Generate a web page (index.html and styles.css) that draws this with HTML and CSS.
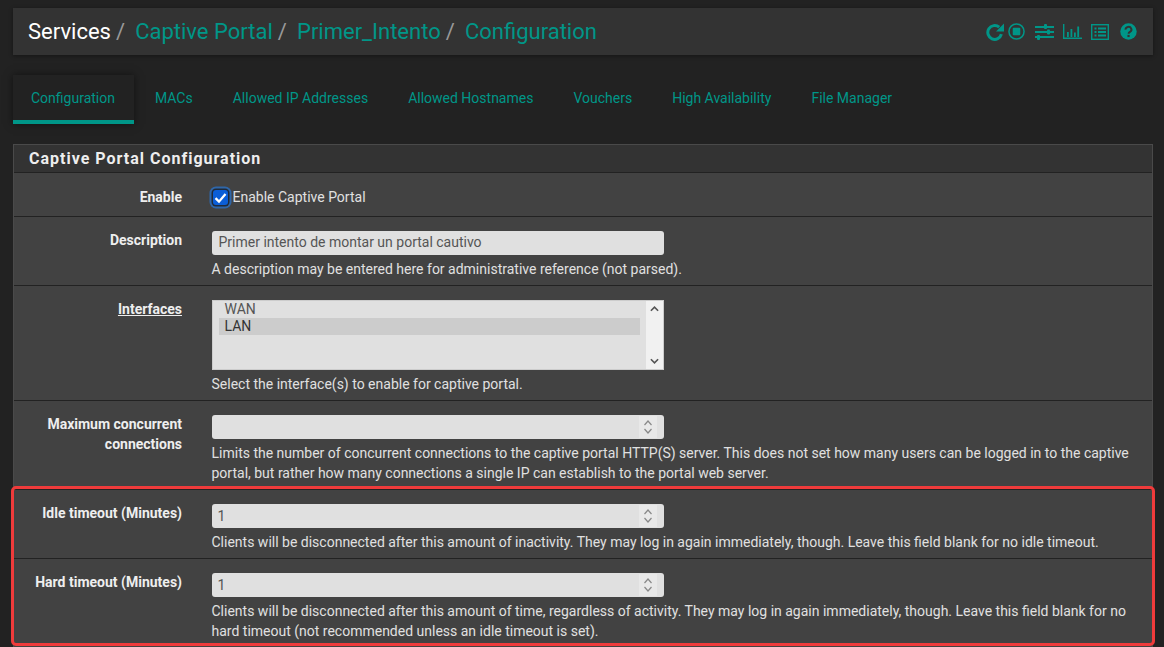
FILE: index.html
```html
<!DOCTYPE html>
<html lang="en">
<head>
<meta charset="utf-8">
<title>Captive Portal Configuration</title>
<link rel="stylesheet" href="styles.css">
</head>
<body>
<header class="crumbs">
  <h1 class="crumb-list">
    <span class="crumb-root">Services</span><span class="sep">/</span>
    <a class="crumb">Captive Portal</a><span class="sep">/</span>
    <a class="crumb">Primer_Intento</a><span class="sep">/</span>
    <a class="crumb">Configuration</a>
  </h1>
  <div class="actions">
    <svg class="ico ico-reload" viewBox="0 0 18 18"><path d="M15.400 11.200A6.900 6.900 0 1 1 13.200 4.200" fill="none" stroke="currentColor" stroke-width="3"/><path d="M10 8.500h8V.5z" fill="currentColor"/></svg>
    <svg class="ico ico-stop" viewBox="0 0 18 18"><circle cx="9" cy="9" r="8" fill="none" stroke="currentColor" stroke-width="1.600"/><rect x="5" y="5" width="8" height="8" rx="1" fill="currentColor"/></svg>
    <svg class="ico ico-sliders" viewBox="0 0 19 16"><path d="M0 3h19M0 8h19M0 13h19" stroke="currentColor" stroke-width="2"/><rect x="9" y="0" width="3" height="5" rx="1" fill="currentColor"/><rect x="12" y="5.500" width="3" height="5" rx="1" fill="currentColor"/><rect x="2" y="11" width="3" height="5" rx="1" fill="currentColor"/></svg>
    <svg class="ico ico-chart" viewBox="0 0 19 15"><path d="M.7 0v14.300H19" fill="none" stroke="currentColor" stroke-width="1.400"/><path d="M4 8h1.800v5H4zM7.500 5h1.800v8H7.500zM11 8.500h1.800V13H11zM14.300 2.500h1.800V13h-1.800z" fill="currentColor"/></svg>
    <svg class="ico ico-list" viewBox="0 0 18 16"><rect x=".7" y=".7" width="16.600" height="14.600" fill="none" stroke="currentColor" stroke-width="1.400"/><path d="M3.500 3.500h2v2h-2zM3.500 7h2v2h-2zM3.500 10.500h2v2h-2zM7 3.500h8v2H7zM7 7h8v2H7zM7 10.500h8v2H7z" fill="currentColor"/></svg>
    <svg class="ico ico-help" viewBox="0 0 18 18"><circle cx="9" cy="9" r="8.700" fill="currentColor"/><path d="M5.900 7a3.100 2.800 0 1 1 4.700 2.300c-1 .7-1.500 1-1.500 2.200" fill="none" stroke="#333" stroke-width="2.100"/><rect x="7.900" y="12.600" width="2.300" height="2.300" fill="#333"/></svg>
  </div>
</header>

<nav class="tabs">
  <a class="tab is-active">Configuration</a>
  <a class="tab">MACs</a>
  <a class="tab">Allowed IP Addresses</a>
  <a class="tab">Allowed Hostnames</a>
  <a class="tab">Vouchers</a>
  <a class="tab">High Availability</a>
  <a class="tab">File Manager</a>
</nav>

<section class="panel">
  <h2 class="panel-title">Captive Portal Configuration</h2>

  <div class="row row-enable">
    <div class="label">Enable</div>
    <div class="field check-field">
      <span class="checkbox"><svg viewBox="0 0 12 12"><path d="M2 6.500l2.800 2.800L10 3.200" fill="none" stroke="#fff" stroke-width="1.800"/></svg></span>
      <span>Enable Captive Portal</span>
    </div>
  </div>

  <div class="row row-desc">
    <div class="label">Description</div>
    <div class="field">
      <div class="input">Primer intento de montar un portal cautivo</div>
      <p class="help">A description may be entered here for administrative reference (not parsed).</p>
    </div>
  </div>

  <div class="row row-if">
    <div class="label label-link">Interfaces</div>
    <div class="field">
      <div class="listbox">
        <div class="options">
          <div class="option">WAN</div>
          <div class="option is-selected">LAN</div>
        </div>
        <div class="scrollbar">
          <svg viewBox="0 0 10 6"><path d="M1 5l4-4 4 4" fill="none" stroke="#555" stroke-width="1.800"/></svg>
          <svg viewBox="0 0 10 6"><path d="M1 1l4 4 4-4" fill="none" stroke="#555" stroke-width="1.800"/></svg>
        </div>
      </div>
      <p class="help">Select the interface(s) to enable for captive portal.</p>
    </div>
  </div>

  <div class="row row-max">
    <div class="label">Maximum concurrent<br>connections</div>
    <div class="field">
      <div class="input number"><span></span><span class="spin"><svg viewBox="0 0 10 16"><path d="M1.500 6l3.500-4 3.500 4M1.500 10l3.500 4 3.500-4" fill="none" stroke="#888" stroke-width="1.200"/></svg></span></div>
      <p class="help">Limits the number of concurrent connections to the captive portal HTTP(S) server. This does not set how many users can be logged in to the captive portal, but rather how many connections a single IP can establish to the portal web server.</p>
    </div>
  </div>

  <div class="row row-time">
    <div class="label">Idle timeout (Minutes)</div>
    <div class="field">
      <div class="input number"><span>1</span><span class="spin"><svg viewBox="0 0 10 16"><path d="M1.500 6l3.500-4 3.500 4M1.500 10l3.500 4 3.500-4" fill="none" stroke="#888" stroke-width="1.200"/></svg></span></div>
      <p class="help">Clients will be disconnected after this amount of inactivity. They may log in again immediately, though. Leave this field blank for no idle timeout.</p>
    </div>
  </div>

  <div class="row row-time">
    <div class="label">Hard timeout (Minutes)</div>
    <div class="field">
      <div class="input number"><span>1</span><span class="spin"><svg viewBox="0 0 10 16"><path d="M1.500 6l3.500-4 3.500 4M1.500 10l3.500 4 3.500-4" fill="none" stroke="#888" stroke-width="1.200"/></svg></span></div>
      <p class="help">Clients will be disconnected after this amount of time, regardless of activity. They may log in again immediately, though. Leave this field blank for no hard timeout (not recommended unless an idle timeout is set).</p>
    </div>
  </div>
</section>
<div class="highlight"></div>
</body>
</html>
```
FILE: styles.css
```css
html, body { height: 647px; overflow: hidden; }
body {
  margin: 0;
  padding: 8px 11px 0 13px;
  position: relative;
  box-sizing: border-box;
  background: #222;
  color: #e0e0e0;
  font: 14px/20px Roboto, sans-serif;
}
h1, h2, p { margin: 0; }
.crumbs {
  height: 47px;
  background: #333;
  box-shadow: 0 1px 4px rgba(0,0,0,.4);
  display: flex;
  align-items: center;
  justify-content: space-between;
  padding: 0 16px 0 15px;
}
.crumb-list { font-size: 22px; font-weight: 400; line-height: 47px; color: #fff; white-space: nowrap; }
.crumb { color: #009688; }
.sep { color: #999; margin: 0 4.700px 0 5px; }
.actions { display: flex; align-items: center; color: #009688; }
.ico { display: block; }
.ico-reload { width: 18px; height: 18px; margin-right: 4px; }
.ico-stop { width: 17px; height: 17px; margin-right: 10px; }
.ico-sliders { width: 19px; height: 16px; margin-right: 9px; }
.ico-chart { width: 19px; height: 15px; margin-right: 9px; }
.ico-list { width: 18px; height: 16px; margin-right: 11px; }
.ico-help { width: 17px; height: 17px; }
.tabs { display: flex; margin-top: 20px; height: 49px; }
.tab {
  color: #009688;
  padding: 13px 20px 0 20px;
  line-height: 20px;
}
.tab:first-child { padding-left: 18px; padding-right: 19px; margin-right: 1px; }
.is-active {
  background: #222;
  border-bottom: 4px solid #009688;
  box-shadow: 0 0 8px rgba(0,0,0,.5);
  box-sizing: border-box;
  height: 49px;
}
.panel {
  margin-top: 20px;
  background: #424242;
  border: 1px solid #4a4a4a;
  border-bottom: 0;
}
.panel-title {
  background: #333;
  height: 28px;
  box-sizing: border-box;
  padding-left: 15px;
  font-size: 16px;
  font-weight: 700;
  line-height: 28px;
  letter-spacing: 1px;
  color: #eee;
  border-bottom: 1px solid #222;
}
.row {
  display: flex;
  border-bottom: 1px solid #222;
  padding-top: 14px;
  box-sizing: border-box;
}
.row:last-child { border-bottom: 0; }
.row-enable { height: 44px; padding-top: 4px; align-items: center; }
.row-desc { height: 69px; }
.row-if { height: 115px; }
.row-max { height: 89px; }
.row-time { height: 69px; }
.row-time:last-child { height: 88px; }
.label {
  width: 168px;
  flex: none;
  text-align: right;
  font-weight: 700;
  color: #eee;
  margin-top: -1px;
}
.row-enable .label { margin-top: 0; }
.label-link { text-decoration: underline; }
.field { margin-left: 29.500px; flex: 1; padding-right: 20px; min-width: 0; }
.check-field { display: flex; align-items: center; gap: 5px; }
.checkbox {
  width: 15px;
  height: 15px;
  margin: 2px 0 0 1px;
  border-radius: 3px;
  background: #0b5ed7;
  box-shadow: 0 0 0 1.500px #1f2a3a, 0 0 0 3.500px #2f66a8;
  box-sizing: border-box;
  display: flex;
}
.checkbox svg { width: 100%; height: 100%; }
.input {
  width: 452px;
  height: 24px;
  box-sizing: border-box;
  background: #e0e0e0;
  border-radius: 3px;
  color: #555;
  padding: 0 7px;
  line-height: 22px;
}
.number { display: flex; justify-content: space-between; align-items: center; padding: 0 7px 0 6px; }
.spin { width: 18px; height: 22px; background: #e8e8e8; display: flex; align-items: center; justify-content: center; }
.spin svg { width: 10px; height: 16px; }
.help { margin-top: 4px; color: #e0e0e0; }
.listbox {
  width: 452px;
  height: 70px;
  box-sizing: border-box;
  background: #e0e0e0;
  border: 1px solid #ccc;
  display: flex;
  justify-content: space-between;
  color: #555;
}
.options { width: 427px; padding: 0 0 0 6px; box-sizing: border-box; line-height: 17px; }
.option { padding-left: 6px; }
.is-selected { background: #ccc; color: #333; }
.scrollbar { width: 17px; background: #f1f1f1; display: flex; flex-direction: column; justify-content: space-between; align-items: center; padding: 5px 0; box-sizing: border-box; }
.scrollbar svg { width: 9px; height: 6px; }
.highlight {
  position: absolute;
  left: 11px;
  top: 486px;
  width: 1144px;
  height: 160px;
  box-sizing: border-box;
  border: 3px solid #ef3b3b;
  border-radius: 5px;
}
```
